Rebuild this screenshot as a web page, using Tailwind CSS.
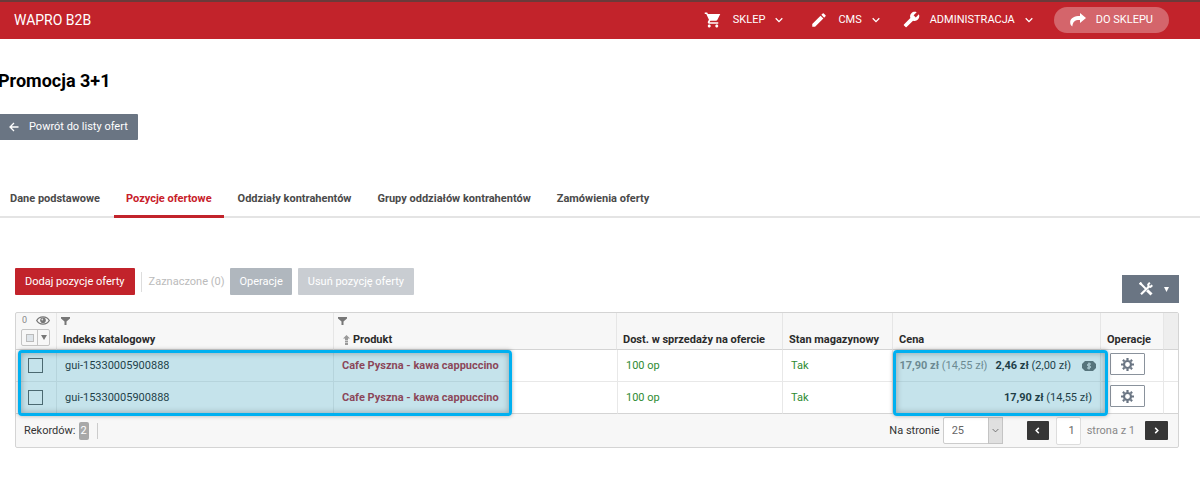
<!DOCTYPE html>
<html lang="pl">
<head>
    <meta charset="UTF-8">
    <meta name="viewport" content="width=device-width, initial-scale=1.0">
    <title>WAPRO B2B - Promocja 3+1</title>
    <script src="https://cdn.jsdelivr.net/npm/@tailwindcss/browser@4"></script>
</head>
<body class="bg-white font-[Roboto,sans-serif] text-[11px] leading-4 text-[#333] overflow-x-hidden">

    <header class="flex h-[39px] items-center justify-between border-t-2 border-[#6b3a3a] bg-[#c2232b] pb-0.5 pl-[14px] pr-[31px] text-white">
        <a href="#" class="text-[14px]">WAPRO B2B</a>
        <nav class="flex items-center">
            <button class="mr-[27px] flex items-center">
                <svg class="mr-[11px] size-[18px]" viewBox="0 0 24 24" fill="currentColor"><path d="M7 18c-1.100 0-1.990.9-1.990 2S5.900 22 7 22s2-.9 2-2-.9-2-2-2zM1 2v2h2l3.600 7.590-1.350 2.450C4.520 15.370 5.480 17 7 17h12v-2H7.420l1.100-2h7.450c.75 0 1.410-.41 1.750-1.030L21.700 4H5.210l-.94-2H1zm16 16c-1.100 0-1.990.9-1.990 2s.89 2 1.990 2 2-.9 2-2-.9-2-2-2z"/></svg>
                <span>SKLEP</span>
                <svg class="ml-[10px] size-2" viewBox="0 0 8 8" fill="none" stroke="currentColor" stroke-width="1.300"><path d="M.7 2.300 4 5.600l3.300-3.300"/></svg>
            </button>
            <button class="mr-[23px] flex items-center">
                <svg class="mr-[10px] size-[18px]" viewBox="0 0 24 24" fill="currentColor"><path d="M3 17.250V21h3.750L17.810 9.940l-3.750-3.750L3 17.250zM20.710 7.040a1 1 0 0 0 0-1.410l-2.340-2.340a1 1 0 0 0-1.410 0l-1.830 1.830 3.750 3.750 1.830-1.830z"/></svg>
                <span>CMS</span>
                <svg class="ml-[10px] size-2" viewBox="0 0 8 8" fill="none" stroke="currentColor" stroke-width="1.300"><path d="M.7 2.300 4 5.600l3.300-3.300"/></svg>
            </button>
            <button class="mr-[21px] flex items-center">
                <svg class="mr-[10px] size-[17px] -scale-x-100" viewBox="0 0 24 24" fill="currentColor"><path d="M22.700 19l-9.100-9.100c.9-2.300.4-5-1.500-6.900-2-2-5-2.400-7.400-1.300L9 6 6 9 1.600 4.700C.4 7.100.9 10.100 2.900 12.100c1.900 1.900 4.600 2.400 6.900 1.500l9.100 9.100c.4.4 1 .4 1.400 0l2.300-2.300c.5-.4.5-1.100.1-1.400z"/></svg>
                <span>ADMINISTRACJA</span>
                <svg class="ml-[10px] size-2" viewBox="0 0 8 8" fill="none" stroke="currentColor" stroke-width="1.300"><path d="M.7 2.300 4 5.600l3.300-3.300"/></svg>
            </button>
            <a href="#" class="flex h-[26px] items-center rounded-full bg-white/30 pl-4 pr-4">
                <svg class="mr-[10px] h-[14px] w-4" viewBox="0 0 16 14" fill="currentColor"><path d="M10 0l6 5-6 5V7C5 6.800 3 8.500 2.300 13.500.6 12.500 0 10.500.2 8.500.6 5 4.500 3 10 3z"/></svg>
                DO SKLEPU
            </a>
        </nav>
    </header>

    <main>
        <div class="-ml-0.5 pt-[30px]">
            <h1 class="text-[18px] leading-6 font-bold text-black">Promocja 3+1</h1>
            <a href="#" class="mt-[21px] inline-flex h-[26px] items-center rounded-[1px] bg-[#6a7583] pl-[11px] pr-[10px] text-white">
                <svg class="mr-[10px] size-[10px]" viewBox="0 0 10 10" fill="none" stroke="currentColor" stroke-width="1.300"><path d="M9.500 5H1M5 1 1 5l4 4"/></svg>
                Powrót do listy ofert
            </a>
        </div>

        <nav class="mt-[51px] border-b-2 border-[#e4e4e4]">
            <ul class="-mb-0.5 -ml-0.5 flex gap-[2px] font-bold text-[#4a4a4a]">
                <li><a href="#" class="block h-[27px] px-3">Dane podstawowe</a></li>
                <li><a href="#" class="block h-[27px] border-b-3 border-[#c2232b] px-3 text-[#c8202a]">Pozycje ofertowe</a></li>
                <li><a href="#" class="block h-[27px] px-3">Oddziały kontrahentów</a></li>
                <li><a href="#" class="block h-[27px] px-3">Grupy oddziałów kontrahentów</a></li>
                <li><a href="#" class="block h-[27px] px-3">Zamówienia oferty</a></li>
            </ul>
        </nav>

        <section class="ml-[15px] mr-[21px] mt-[50px]">
            <div class="flex h-[44px] items-start">
                <button class="h-[27px] rounded-[1px] bg-[#c2232b] px-[10px] text-white">Dodaj pozycje oferty</button>
                <span class="ml-[6px] mt-1 h-5 border-l border-[#ddd] pl-[7px] leading-5 text-[#bbb]">Zaznaczone (0)</span>
                <button class="ml-[6px] h-[27px] rounded-[1px] bg-[#b0b7be] px-[9px] text-white">Operacje</button>
                <button class="ml-[6px] h-[27px] rounded-[1px] bg-[#c9cdd2] px-[10px] text-white">Usuń pozycję oferty</button>
                <button aria-label="Narzędzia" class="ml-auto mt-[7px] flex h-[28px] w-[57px] items-center justify-end gap-[11px] bg-[#6a7583] pr-[10px] text-white">
                    <svg class="size-[14px]" viewBox="0 0 14 14" fill="none" stroke="currentColor"><path stroke-width="2.200" d="M2 12.300 9.800 4.700"/><path stroke-width="2" d="M10.800.7 9.200 2.500l.4 1.900 1.900.4 1.800-1.600"/><path stroke-width="1.900" d="m1 1 6 6"/><path stroke-width="3" d="m8.200 8.200 4.300 4.300"/><path stroke-width="2.200" d="M.6 2.400 2.500.6"/></svg>
                    <svg class="h-[5px] w-[5px]" viewBox="0 0 5 5" fill="currentColor"><path d="M0 0h5L2.500 5z"/></svg>
                </button>
            </div>

            <div class="relative rounded-[2px] border border-[#d4d4d4] bg-[#f7f7f7]">
                <table class="w-full table-fixed border-separate border-spacing-0">
                    <colgroup>
                        <col class="w-[41px]">
                        <col class="w-[277px]">
                        <col>
                        <col class="w-[166px]">
                        <col class="w-[110px]">
                        <col class="w-[208px]">
                        <col class="w-[63px]">
                        <col class="w-[14px]">
                    </colgroup>
                    <thead>
                        <tr class="h-[37px] text-left align-top text-[#2b2b2b] *:border-b *:border-b-[#d4d4d4] *:border-r-[#e6e6e6] *:p-0">
                            <th class="border-r">
                                <div class="flex h-[14px] items-center pl-[6px] text-[9px] font-normal text-[#888]">
                                    0
                                    <svg class="ml-[9px] h-[9px] w-[14px]" viewBox="0 0 14 9" fill="none" stroke="#777"><path stroke-width="1.300" d="M.7 4.500C3.500-.3 10.500-.3 13.300 4.500 10.500 9.300 3.500 9.300.7 4.500z"/><circle cx="7" cy="4.300" r="2.800" fill="#777" stroke="none"/><circle cx="6.300" cy="3.500" r=".9" fill="#ddd" stroke="none"/></svg>
                                </div>
                                <div class="ml-[5px] mt-0.5 flex h-[17px] w-[29px] rounded-[2px] border border-[#c4c4c4]">
                                    <label class="flex w-4 items-center justify-center border-r border-[#c4c4c4]">
                                        <input type="checkbox" aria-label="Zaznacz wszystkie" class="size-2 appearance-none border border-[#bbb] bg-[#dfe5ea]">
                                    </label>
                                    <button aria-label="Opcje zaznaczania" class="flex flex-1 items-center justify-center"><svg class="h-[5px] w-[6px]" viewBox="0 0 6 5" fill="#777"><path d="M0 0h6L3 5z"/></svg></button>
                                </div>
                            </th>
                            <th class="border-r">
                                <svg class="ml-1 mt-1 h-2 w-[9px]" viewBox="0 0 9 8" fill="#777"><path d="M0 0h9v1.500L5.500 4.500V8h-2V4.500L0 1.500z"/></svg>
                                <div class="mt-[7px] pl-[6px]">Indeks katalogowy</div>
                            </th>
                            <th class="border-r">
                                <svg class="ml-1 mt-1 h-2 w-[9px]" viewBox="0 0 9 8" fill="#777"><path d="M0 0h9v1.500L5.500 4.500V8h-2V4.500L0 1.500z"/></svg>
                                <div class="mt-[7px] flex items-center pl-[9px]">
                                    <svg class="mr-[3px] h-[10px] w-[7px]" viewBox="0 0 7 10" fill="#999"><path d="M3.500 0 7 3.500H5V10H2V3.500H0z"/><path fill="#ccc" d="M2 5h3v1H2zM2 7h3v1H2z"/></svg>
                                    Produkt
                                </div>
                            </th>
                            <th class="border-r"><div class="mt-[19px] pl-[6px]">Dost. w sprzedaży na ofercie</div></th>
                            <th class="border-r"><div class="mt-[19px] pl-[6px]">Stan magazynowy</div></th>
                            <th class="border-r"><div class="mt-[19px] pl-[6px]">Cena</div></th>
                            <th class="border-r"><div class="mt-[19px] pl-[6px]">Operacje</div></th>
                            <th class="bg-[#eee]"></th>
                        </tr>
                    </thead>
                    <tbody class="bg-white">
                        <tr class="h-8 *:border-b *:border-[#e8e8e8] *:p-0">
                            <td class="border-r"><input type="checkbox" aria-label="Zaznacz pozycję 1" class="ml-3 block size-[15px] appearance-none border border-[#444] bg-white"></td>
                            <td class="border-r text-black"><div class="pl-2">gui-15330005900888</div></td>
                            <td><div class="pl-2 font-bold"><a href="#" class="text-[#a80c20]">Cafe Pyszna - kawa cappuccino</a></div></td>
                            <td class="border-x text-[#2e8b32]"><div class="pl-2">100 op</div></td>
                            <td class="border-r text-[#2e8b32]"><div class="pl-2">Tak</div></td>
                            <td class="border-r text-black">
                                <div class="flex items-center justify-end pr-1">
                                    <span class="text-[#777]"><b>17,90 zł</b> (14,55 zł)</span>
                                    <span class="ml-2"><b>2,46 zł</b> (2,00 zł)</span>
                                    <svg class="ml-[11px] h-[10px] w-[14px]" viewBox="0 0 14 10"><path fill="#555" d="M3 0h8l3 3v4l-3 3H3L0 7V3z"/><path fill="none" stroke="#eee" d="M9 3H6.500a1 1 0 0 0 0 2h1a1 1 0 0 1 0 2H5M7 1.500v7"/></svg>
                                </div>
                            </td>
                            <td class="border-r">
                                <button aria-label="Operacje pozycji 1" class="mb-[3px] ml-[9px] flex h-[22px] w-[35px] items-center justify-center rounded-[1px] border border-[#8a929c]">
                                    <svg class="size-[13px]" viewBox="0 0 13 13" fill="none" stroke="#6a7583"><circle cx="6.500" cy="6.500" r="3.500" stroke-width="2.200"/><path stroke-width="2.200" d="M6.500 0v2M6.500 11v2M0 6.500h2M11 6.500h2M1.900 1.900l1.400 1.400M9.700 9.700l1.400 1.400M1.900 11.100l1.400-1.400M9.700 3.300l1.400-1.400"/></svg>
                                </button>
                            </td>
                            <td></td>
                        </tr>
                        <tr class="h-8 *:border-b *:border-b-[#d4d4d4] *:border-x-[#e8e8e8] *:p-0">
                            <td class="border-r"><input type="checkbox" aria-label="Zaznacz pozycję 2" class="ml-3 block size-[15px] appearance-none border border-[#444] bg-white"></td>
                            <td class="border-r text-black"><div class="pl-2">gui-15330005900888</div></td>
                            <td><div class="pl-2 font-bold"><a href="#" class="text-[#a80c20]">Cafe Pyszna - kawa cappuccino</a></div></td>
                            <td class="border-x text-[#2e8b32]"><div class="pl-2">100 op</div></td>
                            <td class="border-r text-[#2e8b32]"><div class="pl-2">Tak</div></td>
                            <td class="border-r text-black"><div class="pr-2 text-right"><b>17,90 zł</b> (14,55 zł)</div></td>
                            <td class="border-r">
                                <button aria-label="Operacje pozycji 2" class="mb-[3px] ml-[9px] flex h-[22px] w-[35px] items-center justify-center rounded-[1px] border border-[#8a929c]">
                                    <svg class="size-[13px]" viewBox="0 0 13 13" fill="none" stroke="#6a7583"><circle cx="6.500" cy="6.500" r="3.500" stroke-width="2.200"/><path stroke-width="2.200" d="M6.500 0v2M6.500 11v2M0 6.500h2M11 6.500h2M1.900 1.900l1.400 1.400M9.700 9.700l1.400 1.400M1.900 11.100l1.400-1.400M9.700 3.300l1.400-1.400"/></svg>
                                </button>
                            </td>
                            <td></td>
                        </tr>
                    </tbody>
                </table>

                <div class="flex h-[33px] items-center pl-2 pr-[10px]">
                    <span>Rekordów:</span>
                    <span class="ml-[3px] h-[18px] rounded-[2px] bg-[#a8a8a8] px-[2px] leading-[18px] text-white">2</span>
                    <span class="ml-2 h-4 border-l border-[#ccc]"></span>
                    <label for="perPage" class="ml-auto">Na stronie</label>
                    <div class="relative ml-[3px] flex">
                        <select id="perPage" class="h-[27px] w-[60px] appearance-none rounded-[2px] border border-[#ccc] bg-white pl-2 text-[#666]">
                            <option>25</option>
                        </select>
                        <span class="pointer-events-none absolute inset-y-0 right-0 flex w-[15px] items-center justify-center border border-[#c4c4c4] bg-[#e0e0e0]">
                            <svg class="size-[7px]" viewBox="0 0 8 8" fill="none" stroke="#666"><path d="M.7 2.300 4 5.600l3.300-3.300"/></svg>
                        </span>
                    </div>
                    <button aria-label="Poprzednia strona" class="ml-6 flex h-[19px] w-[22px] items-center justify-center rounded-[1px] bg-[#363636] text-white"><svg class="size-[7px]" viewBox="0 0 8 8" fill="none" stroke="currentColor" stroke-width="1.700"><path d="M5.500 1 2.500 4l3 3"/></svg></button>
                    <input id="pageNo" type="text" value="1" aria-label="Numer strony" class="ml-[7px] h-[28px] w-[25px] rounded-[2px] border border-[#ddd] bg-white pr-[5px] text-right text-[#666]">
                    <span class="ml-[6px] text-[#888]">strona z 1</span>
                    <button aria-label="Następna strona" class="ml-[10px] flex h-[19px] w-[23px] items-center justify-center rounded-[1px] bg-[#363636] text-white"><svg class="size-[7px]" viewBox="0 0 8 8" fill="none" stroke="currentColor" stroke-width="1.700"><path d="M2.500 1l3 3-3 3"/></svg></button>
                </div>

                <!-- wyróżnienia -->
                <div class="pointer-events-none absolute left-[2px] top-[37px] h-[66px] w-[494px] rounded-[4px] border-3 border-[#00b0f0] bg-[#59afc5]/35 shadow-[inset_0_0_6px_rgba(0,0,0,0.3),0_0_4px_rgba(0,0,0,0.3)]"></div>
                <div class="pointer-events-none absolute right-[70px] top-[37px] h-[66px] w-[215px] rounded-[4px] border-3 border-[#00b0f0] bg-[#59afc5]/35 shadow-[inset_0_0_6px_rgba(0,0,0,0.3),0_0_4px_rgba(0,0,0,0.3)]"></div>
            </div>
        </section>
    </main>
</body>
</html>
